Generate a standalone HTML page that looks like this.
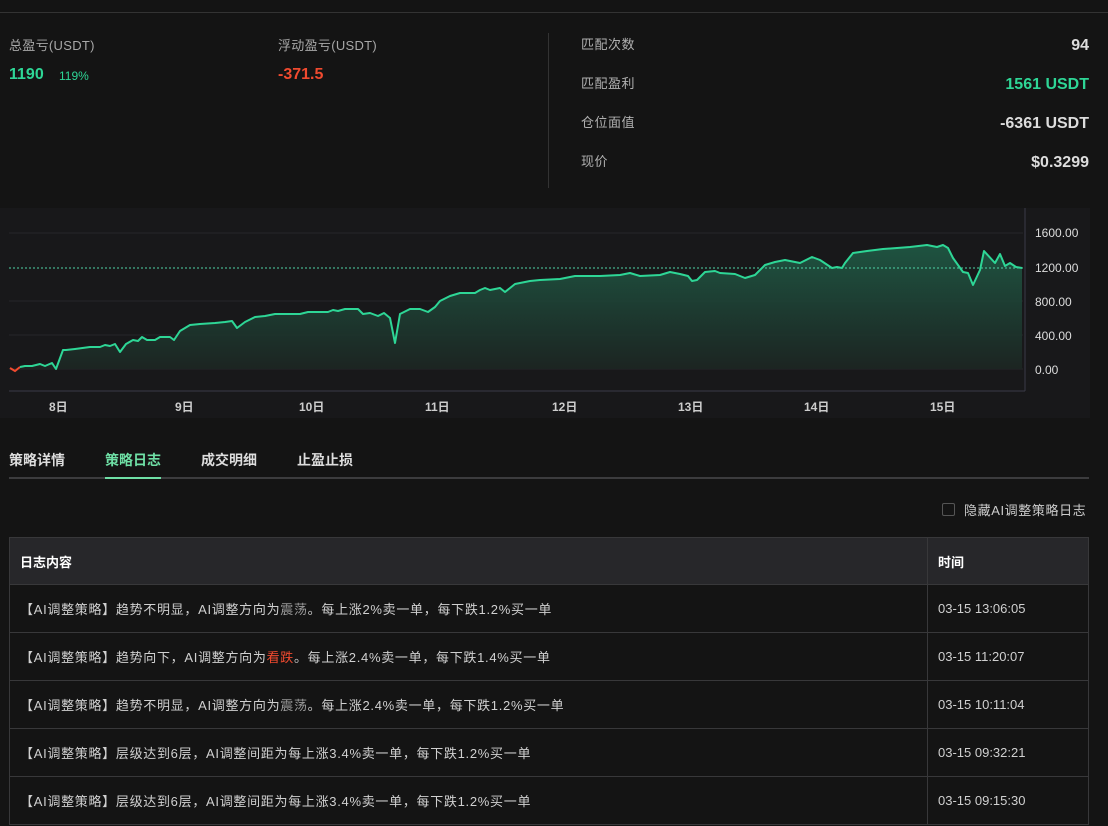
<!DOCTYPE html>
<html><head><meta charset="utf-8"><style>
*{margin:0;padding:0;box-sizing:border-box}
body{width:1108px;height:826px;overflow:hidden;background:#141414;font-family:"Liberation Sans","Noto Sans CJK SC",sans-serif;color:#ccc;position:relative}
.a{position:absolute;white-space:nowrap}
.lbl{font-size:13px;color:#a8a8a8;letter-spacing:.3px}
.rl{font-size:13px;color:#b0b0b0;left:581px;letter-spacing:.5px}
.rv{right:19px;font-size:16px;font-weight:bold;color:#ddd}
.tab{font-size:14px;font-weight:bold;color:#ddd;top:450px}
table{position:absolute;left:9px;top:537px;width:1080px;border-collapse:collapse;font-size:13px}
td,th{border:1px solid #38383a;height:48px;padding:0 10px;text-align:left;color:#d0d0d0;font-weight:normal}
td:first-child{letter-spacing:.7px}
th{background:#27272a;font-weight:bold;color:#fff;height:47px}
.red{color:#f04a2f}.gry{color:#999}
.dl{font-size:12px;font-weight:bold;color:#ccc;top:398px}
.yl{font-size:12px;color:#ddd;left:1035px}
</style></head><body>
<div class="a" style="left:0;top:12px;width:1108px;height:1px;background:#333"></div>
<div class="a lbl" style="left:9px;top:35px">总盈亏(USDT)</div>
<div class="a" style="left:9px;top:66px;font-size:16px;font-weight:bold;color:#2ed696">1190</div>
<div class="a" style="left:59px;top:69px;font-size:12px;color:#2ed696">119%</div>
<div class="a lbl" style="left:278px;top:35px">浮动盈亏(USDT)</div>
<div class="a" style="left:278px;top:66px;font-size:16px;font-weight:bold;color:#f04a2f">-371.5</div>
<div class="a" style="left:548px;top:33px;width:1px;height:155px;background:#333"></div>
<div class="a rl" style="top:34px">匹配次数</div><div class="a rv" style="top:37px">94</div>
<div class="a rl" style="top:73px">匹配盈利</div><div class="a rv" style="top:76px;color:#2ed696">1561 USDT</div>
<div class="a rl" style="top:112px">仓位面值</div><div class="a rv" style="top:115px">-6361 USDT</div>
<div class="a rl" style="top:151px">现价</div><div class="a rv" style="top:154px">$0.3299</div>

<div class="a" style="left:0;top:208px;width:1090px;height:210px;background:#18181a"></div>
<svg class="a" style="left:0;top:0" width="1108" height="430">
<defs><linearGradient id="g" x1="0" y1="0" x2="0" y2="1"><stop offset="0" stop-color="#1f5a45" stop-opacity=".9"/><stop offset="1" stop-color="#1c2522" stop-opacity=".9"/></linearGradient></defs>
<g stroke="#26262a" stroke-width="1"><line x1="9" y1="233" x2="1023" y2="233"/><line x1="9" y1="301" x2="1023" y2="301"/><line x1="9" y1="335" x2="1023" y2="335"/><line x1="9" y1="369" x2="1023" y2="369"/></g>
<line x1="1025" y1="208" x2="1025" y2="391" stroke="#3a3a48"/><line x1="9" y1="391" x2="1025" y2="391" stroke="#3a3a48"/>
<polygon fill="url(#g)" points="10,369 10,368 15,371 20,367 25,366 32,366 40,364 45,366 52,363 56,369 63,350 66,350 75,349 90,347 100,347 105,345 110,346 115,344 120,352 126,344 133,340 138,341 142,337 147,340 155,340 160,337 170,337 174,340 180,331 190,325 200,324 215,323 225,322 232,321 237,328 245,322 255,317 265,316 275,314 300,314 308,312 328,312 333,310 338,311 345,309 358,309 363,314 370,313 378,316 384,313 390,318 395,343 400,314 410,309 420,309 428,312 435,307 440,301 450,296 460,293 475,293 480,290 485,288 490,290 500,288 505,292 515,284 530,281 540,280 560,279 575,276 600,276 620,275 630,273 640,276 660,275 670,272 680,274 688,276 692,281 697,280 705,272 715,271 720,273 735,274 745,278 755,275 765,265 775,262 785,260 795,262 800,263 812,257 820,260 832,268 837,267 842,268 845,263 853,253 867,251 883,249 897,248 910,247 927,245 937,247 943,245 948,248 953,258 963,272 968,273 973,285 980,270 984,251 995,263 1000,254 1005,266 1010,263 1016,267 1022,268 1022,369"/>
<line x1="9" y1="268" x2="1023" y2="268" stroke="#4fd3a6" stroke-dasharray="2,2" stroke-width="1"/>
<polyline fill="none" stroke="#f04a2f" stroke-width="2" points="10,368 15,371 20,367"/>
<polyline fill="none" stroke="#2ed696" stroke-width="2" stroke-linejoin="round" points="20,367 25,366 32,366 40,364 45,366 52,363 56,369 63,350 66,350 75,349 90,347 100,347 105,345 110,346 115,344 120,352 126,344 133,340 138,341 142,337 147,340 155,340 160,337 170,337 174,340 180,331 190,325 200,324 215,323 225,322 232,321 237,328 245,322 255,317 265,316 275,314 300,314 308,312 328,312 333,310 338,311 345,309 358,309 363,314 370,313 378,316 384,313 390,318 395,343 400,314 410,309 420,309 428,312 435,307 440,301 450,296 460,293 475,293 480,290 485,288 490,290 500,288 505,292 515,284 530,281 540,280 560,279 575,276 600,276 620,275 630,273 640,276 660,275 670,272 680,274 688,276 692,281 697,280 705,272 715,271 720,273 735,274 745,278 755,275 765,265 775,262 785,260 795,262 800,263 812,257 820,260 832,268 837,267 842,268 845,263 853,253 867,251 883,249 897,248 910,247 927,245 937,247 943,245 948,248 953,258 963,272 968,273 973,285 980,270 984,251 995,263 1000,254 1005,266 1010,263 1016,267 1022,268"/>
</svg>
<div class="a yl" style="top:226px">1600.00</div><div class="a yl" style="top:261px">1200.00</div><div class="a yl" style="top:295px">800.00</div><div class="a yl" style="top:329px">400.00</div><div class="a yl" style="top:363px">0.00</div>
<div class="a dl" style="left:49px">8日</div><div class="a dl" style="left:175px">9日</div><div class="a dl" style="left:299px">10日</div><div class="a dl" style="left:425px">11日</div><div class="a dl" style="left:552px">12日</div><div class="a dl" style="left:678px">13日</div><div class="a dl" style="left:804px">14日</div><div class="a dl" style="left:930px">15日</div>

<div class="a tab" style="left:9px">策略详情</div>
<div class="a tab" style="left:105px;color:#6fe0a6">策略日志</div>
<div class="a tab" style="left:201px">成交明细</div>
<div class="a tab" style="left:297px">止盈止损</div>
<div class="a" style="left:9px;top:477px;width:1080px;height:2px;background:#3c3c3e"></div>
<div class="a" style="left:105px;top:477px;width:56px;height:2px;background:#6fe0a6"></div>

<div class="a" style="left:942px;top:503px;width:13px;height:13px;border:1px solid #555;border-radius:2px"></div>
<div class="a" style="left:964px;top:500px;font-size:13px;color:#ccc;letter-spacing:.6px">隐藏AI调整策略日志</div>

<table>
<tr><th>日志内容</th><th style="width:161px">时间</th></tr>
<tr><td>【AI调整策略】趋势不明显，AI调整方向为<span class="gry">震荡</span>。每上涨2%卖一单，每下跌1.2%买一单</td><td>03-15 13:06:05</td></tr>
<tr><td>【AI调整策略】趋势向下，AI调整方向为<span class="red">看跌</span>。每上涨2.4%卖一单，每下跌1.4%买一单</td><td>03-15 11:20:07</td></tr>
<tr><td>【AI调整策略】趋势不明显，AI调整方向为<span class="gry">震荡</span>。每上涨2.4%卖一单，每下跌1.2%买一单</td><td>03-15 10:11:04</td></tr>
<tr><td>【AI调整策略】层级达到6层，AI调整间距为每上涨3.4%卖一单，每下跌1.2%买一单</td><td>03-15 09:32:21</td></tr>
<tr><td>【AI调整策略】层级达到6层，AI调整间距为每上涨3.4%卖一单，每下跌1.2%买一单</td><td>03-15 09:15:30</td></tr>
</table>
</body></html>
